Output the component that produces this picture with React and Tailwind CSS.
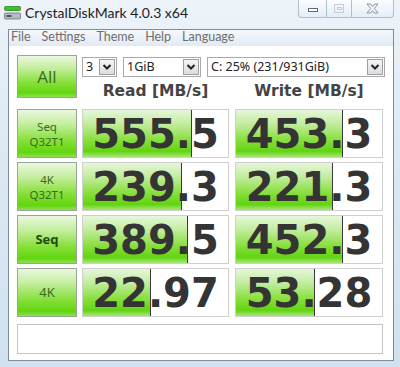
import React from "react";

const GREEN_BAR =
  "bg-[linear-gradient(to_bottom,#e6f7da_0%,#c2ec9e_30%,#86de3a_65%,#62d410_88%,#a8e67a_100%)]";

function Combo({ w, text }) {
  return (
    <div
      className={`${w} h-[20px] flex items-center justify-between border border-[#a9a9a9] bg-white pl-[3px] pr-[1px]`}
    >
      <span className="text-[12.5px] leading-none text-[#222] font-['Noto_Sans',sans-serif]">
        {text}
      </span>
      <div className="w-[16px] h-[16px] flex items-center justify-center border border-[#9aa0a6] bg-[linear-gradient(to_bottom,#f6f6f6,#dcdcdc)]">
        <svg width="10" height="8" viewBox="0 0 10 8">
          <path d="M1.5 2 L5 5.5 L8.5 2" fill="none" stroke="#222" strokeWidth="2" />
        </svg>
      </div>
    </div>
  );
}

function SideButton({ children, className = "" }) {
  return (
    <div
      className={`w-[60px] shrink-0 h-full flex flex-col items-center justify-center border border-[#9aa59a] bg-[linear-gradient(to_bottom,#eaf8e0_0%,#c4ee9e_30%,#86e03a_65%,#62d60e_90%,#8ee056_100%)] text-[#3d6a22] leading-[15px] ${className}`}
    >
      {children}
    </div>
  );
}

function Value({ text, fill, w }) {
  return (
    <div className={`${w} h-full relative border border-[#cfcfcf] bg-white`}>
      <div
        className={`absolute left-0 top-0 bottom-0 border-r border-r-[#3a3a3a] ${GREEN_BAR}`}
        style={{ width: fill }}
      />
      <div className="relative h-full flex items-center justify-center pt-[1px] text-[40px] font-bold text-[#343434] font-['DejaVu_Sans',sans-serif] leading-none">
        {text}
      </div>
    </div>
  );
}

const rows = [
  { label: ["Seq", "Q32T1"], r: "555.5", rf: 109, w: "453.3", wf: 107 },
  { label: ["4K", "Q32T1"], r: "239.3", rf: 99, w: "221.3", wf: 97 },
  { label: ["Seq"], bold: true, r: "389.5", rf: 105, w: "452.3", wf: 107 },
  { label: ["4K"], r: "22.97", rf: 68, w: "53.28", wf: 79 },
];

export default function App() {
  return (
    <div className="w-[400px] h-[367px] overflow-hidden bg-[linear-gradient(to_bottom,#edf3f9_0%,#dce9f3_40%,#d0e1ef_100%)] font-['Lato',sans-serif]">
      {/* title bar */}
      <div className="h-[28px] flex items-start justify-between">
        <div className="flex items-center pl-[4px] pt-[6px] gap-[4px]">
          <svg width="17" height="14" viewBox="0 0 17 14">
            <rect x="0.5" y="0.5" width="16" height="4" rx="1" fill="#3fbf2a" stroke="#2a8a1c" strokeWidth="0.8" />
            <rect x="0.5" y="7" width="16" height="6" rx="1" fill="#b7bcc4" stroke="#6e747c" strokeWidth="0.8" />
            <rect x="2.5" y="9" width="5" height="2" fill="#50555c" />
          </svg>
          <span className="text-[14px] text-[#1e1e1e] leading-none">
            CrystalDiskMark 4.0.3 x64
          </span>
        </div>
        <div className="flex shrink-0 mr-[6px]">
          <div className="w-[29px] h-[18px] flex items-center justify-center border border-[#aebfce] border-t-0 rounded-bl-[4px] bg-[linear-gradient(to_bottom,#fbfdff,#e4edf6)]">
            <div className="w-[10px] h-[4px] border border-[#5f6a78] bg-white mt-[3px]" />
          </div>
          <div className="w-[25px] h-[18px] flex items-center justify-center border border-[#aebfce] border-t-0 border-l-0 bg-[linear-gradient(to_bottom,#fbfdff,#e4edf6)]">
            <div className="w-[10px] h-[9px] border border-[#c4ccd6] flex items-center justify-center">
              <div className="w-[5px] h-[3px] border border-[#c4ccd6]" />
            </div>
          </div>
          <div className="w-[42px] h-[18px] flex items-center justify-center border border-[#aebfce] border-t-0 border-l-0 rounded-br-[4px] bg-[linear-gradient(to_bottom,#fbfdff,#e4edf6)]">
            <svg width="13" height="11" viewBox="0 0 13 11">
              <path
                d="M1 1 L4.5 1 L6.5 3.5 L8.5 1 L12 1 L8.3 5.5 L12 10 L8.5 10 L6.5 7.5 L4.5 10 L1 10 L4.7 5.5 Z"
                fill="#f4f6f8"
                stroke="#7f8a96"
                strokeWidth="0.9"
              />
            </svg>
          </div>
        </div>
      </div>

      {/* client */}
      <div className="ml-[8px] mr-[6px] mt-[1px] h-[332px] border border-[#7f8d9a] bg-white flex flex-col">
        <div className="h-[16px] flex items-center gap-[11px] pl-[2px] bg-[linear-gradient(to_bottom,#f6f9fc,#e2eaf3)] border-b border-[#e4eaf0] text-[12.5px] text-[#6e6e6e] leading-none">
          <span>File</span>
          <span>Settings</span>
          <span>Theme</span>
          <span>Help</span>
          <span>Language</span>
        </div>

        <div className="flex-1 flex flex-col pl-[8px] pr-[10px] pt-[9px]">
          {/* top section */}
          <div className="flex gap-[5px] h-[43px]">
            <SideButton className="text-[17px]">
              <span className="font-['Open_Sans',sans-serif]">All</span>
            </SideButton>
            <div className="flex flex-col">
              <div className="flex items-center pt-[2px] gap-[6px]">
                <Combo w="w-[35px]" text="3" />
                <Combo w="w-[78px]" text="1GiB" />
                <Combo w="w-[178px]" text="C: 25% (231/931GiB)" />
              </div>
              <div className="flex gap-[6px] mt-[7px]">
                <div className="w-[147px] text-center text-[15.5px] font-bold text-[#444] leading-none font-['DejaVu_Sans',sans-serif]">
                  Read [MB/s]
                </div>
                <div className="w-[148px] text-center text-[15.5px] font-bold text-[#444] leading-none font-['DejaVu_Sans',sans-serif]">
                  Write [MB/s]
                </div>
              </div>
            </div>
          </div>

          {/* rows */}
          <div className="flex flex-col gap-[4px] mt-[11px]">
            {rows.map((r, i) => (
              <div key={i} className="flex gap-[5px] h-[49px]">
                <SideButton
                  className={
                    r.bold
                      ? "text-[13px] font-bold text-[#234a10] font-['Noto_Sans',sans-serif]"
                      : r.label.length > 1
                      ? "text-[11.5px] font-['Noto_Sans',sans-serif]"
                      : "text-[13px] font-['Noto_Sans',sans-serif]"
                  }
                >
                  {r.label.map((l) => (
                    <span key={l}>{l}</span>
                  ))}
                </SideButton>
                <div className="flex gap-[6px]">
                  <Value text={r.r} fill={r.rf} w="w-[147px]" />
                  <Value text={r.w} fill={r.wf} w="w-[148px]" />
                </div>
              </div>
            ))}
          </div>

          {/* status */}
          <div className="mt-[7px] h-[30px] border border-[#c4c4c4] bg-white" />
        </div>
      </div>
    </div>
  );
}
